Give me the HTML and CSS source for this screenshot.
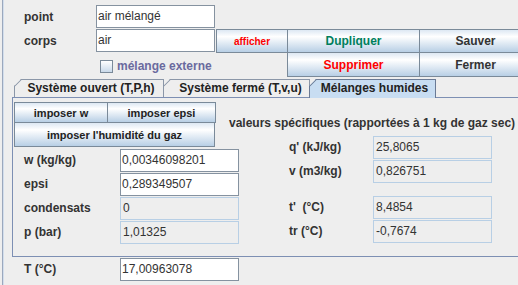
FILE: index.html
```html
<!DOCTYPE html>
<html lang="fr">

<head>
    <meta charset="UTF-8">
    <title>Mélanges humides</title>
    <link rel="stylesheet" href="styles.css">
</head>

<body>
    <div class="window">

        <!-- Point / corps -->
        <div class="top">
            <span class="lbl">point</span>
            <div class="field top-field">air mélangé</div>
            <span class="lbl">corps</span>
            <div class="field top-field">air</div>
            <button class="btn afficher">afficher</button>
            <div class="actions">
                <button class="btn green">Dupliquer</button>
                <button class="btn">Sauver</button>
                <button class="btn red">Supprimer</button>
                <button class="btn">Fermer</button>
            </div>
            <label class="check"><span class="box"></span>mélange externe</label>
        </div>

        <!-- Tabs -->
        <div class="tabs">
            <div class="tab-strip">
                <div class="tab tab-1">Système ouvert (T,P,h)</div>
                <div class="tab tab-2">Système fermé (T,v,u)</div>
                <div class="tab tab-3 selected">Mélanges humides</div>
            </div>

            <div class="panel">
                <div class="col-left">
                    <div class="impose">
                        <button class="btn small">imposer w</button>
                        <button class="btn small">imposer epsi</button>
                        <button class="btn small wide">imposer l'humidité du gaz</button>
                    </div>
                    <div class="row"><span class="row-lbl">w (kg/kg)</span><div class="field">0,00346098201</div></div>
                    <div class="row"><span class="row-lbl">epsi</span><div class="field">0,289349507</div></div>
                    <div class="row"><span class="row-lbl">condensats</span><div class="field ro">0</div></div>
                    <div class="row"><span class="row-lbl">p (bar)</span><div class="field ro">1,01325</div></div>
                </div>

                <div class="col-right">
                    <div class="heading">valeurs spécifiques (rapportées à 1 kg de gaz sec)</div>
                    <div class="row"><span class="row-lbl">q' (kJ/kg)</span><div class="field ro">25,8065</div></div>
                    <div class="row"><span class="row-lbl">v (m3/kg)</span><div class="field ro">0,826751</div></div>
                    <div class="spacer"></div>
                    <div class="row"><span class="row-lbl">t'&nbsp; (°C)</span><div class="field ro">8,4854</div></div>
                    <div class="row"><span class="row-lbl">tr (°C)</span><div class="field ro">-0,7674</div></div>
                </div>
            </div>
        </div>

        <!-- Temperature -->
        <div class="row t-row"><span class="row-lbl">T (°C)</span><div class="field">17,00963078</div></div>
    </div>
</body>

</html>
```

FILE: styles.css
```css
/* Global */
body {
    margin: 0;
    width: 518px;
    height: 285px;
    overflow: hidden;
    background-color: #eeeeee;
    font-family: "Liberation Sans", Arial, sans-serif;
    font-size: 12px;
    color: #333333;
}

.window {
    margin-left: 2px;
    height: 285px;
    border-left: 1px solid #9ba8bd;
    box-shadow: inset 1px 0 0 #d3deec;
}

/* Fields */
.field {
    flex-shrink: 0;
    box-sizing: border-box;
    width: 119px;
    height: 23px;
    padding-left: 1px;
    line-height: 21px;
    background-color: #ffffff;
    border: 1px solid #8592a0;
    white-space: nowrap;
    overflow: hidden;
}

.field.ro {
    background-color: #eeeeee;
    border-color: #b8cfe5;
    padding-left: 2px;
}

/* Buttons */
.btn {
    box-sizing: border-box;
    margin: 0;
    padding: 0;
    font-family: inherit;
    font-size: 12px;
    font-weight: bold;
    color: #333333;
    border: 1px solid #7a8a99;
    background: linear-gradient(to bottom, #dde8f3 0%, #ffffff 30%, #b8cfe5 100%);
    cursor: pointer;
}

.btn.red {
    color: #ff0000;
}

.btn.green {
    color: #007f5c;
}

/* Top section */
.top {
    display: grid;
    grid-template-columns: 93px 120px 72px 1fr;
    grid-template-rows: 24px 24px 24px;
    padding-top: 5px;
}

.lbl {
    grid-column: 1;
    padding-left: 21px;
    font-weight: bold;
    line-height: 24px;
}

.top-field {
    grid-column: 2;
}

.afficher {
    grid-column: 3;
    grid-row: 2;
    height: 24px;
    font-size: 10px;
    color: #ff0000;
}

.actions {
    grid-column: 4;
    grid-row: 2 / 4;
    display: grid;
    grid-template-columns: 133px 112px;
    grid-template-rows: 24px 24px;
    margin-left: -1px;
}

.actions .btn:nth-child(even) {
    margin-left: -1px;
}

.actions .btn:nth-child(n+3) {
    margin-top: -1px;
}

.check {
    grid-column: 2;
    grid-row: 3;
    display: flex;
    align-items: center;
    height: 26px;
    padding-left: 4px;
    font-weight: bold;
    color: #6a6a9e;
}

.box {
    box-sizing: border-box;
    width: 13px;
    height: 13px;
    margin-right: 4px;
    border: 1px solid #7a8a99;
    background: linear-gradient(to bottom, #ffffff 0%, #c9d9ea 100%);
}

/* Tabs */
.tabs {
    margin: 2px 0 0 9px;
    width: 520px;
}

.tab-strip {
    display: flex;
    padding-left: 2px;
    height: 18px;
}

.tab {
    position: relative;
    box-sizing: border-box;
    height: 18px;
    line-height: 17px;
    text-align: center;
    font-weight: bold;
    color: #222222;
    border: 1px solid #8b97a8;
    border-bottom: none;
    clip-path: polygon(0 7px, 7px 0, 100% 0, 100% 100%, 0 100%);
}

.tab::before {
    content: "";
    position: absolute;
    left: -1px;
    top: 6px;
    width: 10px;
    height: 1px;
    background-color: #8b97a8;
    transform-origin: left top;
    transform: rotate(-45deg);
}

.tab-1 {
    width: 150px;
    padding-left: 4px;
}

.tab-2 {
    width: 147px;
    margin-left: -1px;
    padding-left: 8px;
}

.tab-3 {
    width: 127px;
    margin-left: -1px;
    padding-left: 4px;
}

.tab.selected {
    height: 19px;
    background-color: #c8ddf2;
    border-color: #6a7a95;
    z-index: 1;
}

.tab.selected::before {
    background-color: #6a7a95;
}

.panel {
    box-sizing: border-box;
    height: 160px;
    display: grid;
    grid-template-columns: 215px 1fr;
    padding: 4px 0 0 1px;
    border: 1px solid #7d8fb3;
    border-right: none;
}

/* Impose buttons */
.impose {
    display: grid;
    grid-template-columns: 94px 108px;
    grid-template-rows: 21px 24px;
    margin-bottom: 1px;
}

.btn.small {
    font-size: 11px;
    color: #222222;
}

.impose .btn:nth-child(2) {
    margin-left: -1px;
}

.btn.wide {
    grid-column: 1 / 3;
    margin-top: -1px;
    width: 201px;
}

/* Value rows */
.row {
    display: flex;
    align-items: center;
    height: 24px;
}

.row-lbl {
    flex-shrink: 0;
    font-weight: bold;
    white-space: nowrap;
}

.col-left .row-lbl {
    width: 96px;
    padding-left: 10px;
}

.col-right .row-lbl {
    width: 84px;
    padding-left: 60px;
}

.heading {
    margin-top: 14px;
    margin-bottom: 5px;
    line-height: 14px;
    font-weight: bold;
    white-space: nowrap;
}

.spacer {
    height: 12px;
}

.t-row {
    margin-top: 0;
}

.t-row .row-lbl {
    width: 96px;
    padding-left: 21px;
}
```
